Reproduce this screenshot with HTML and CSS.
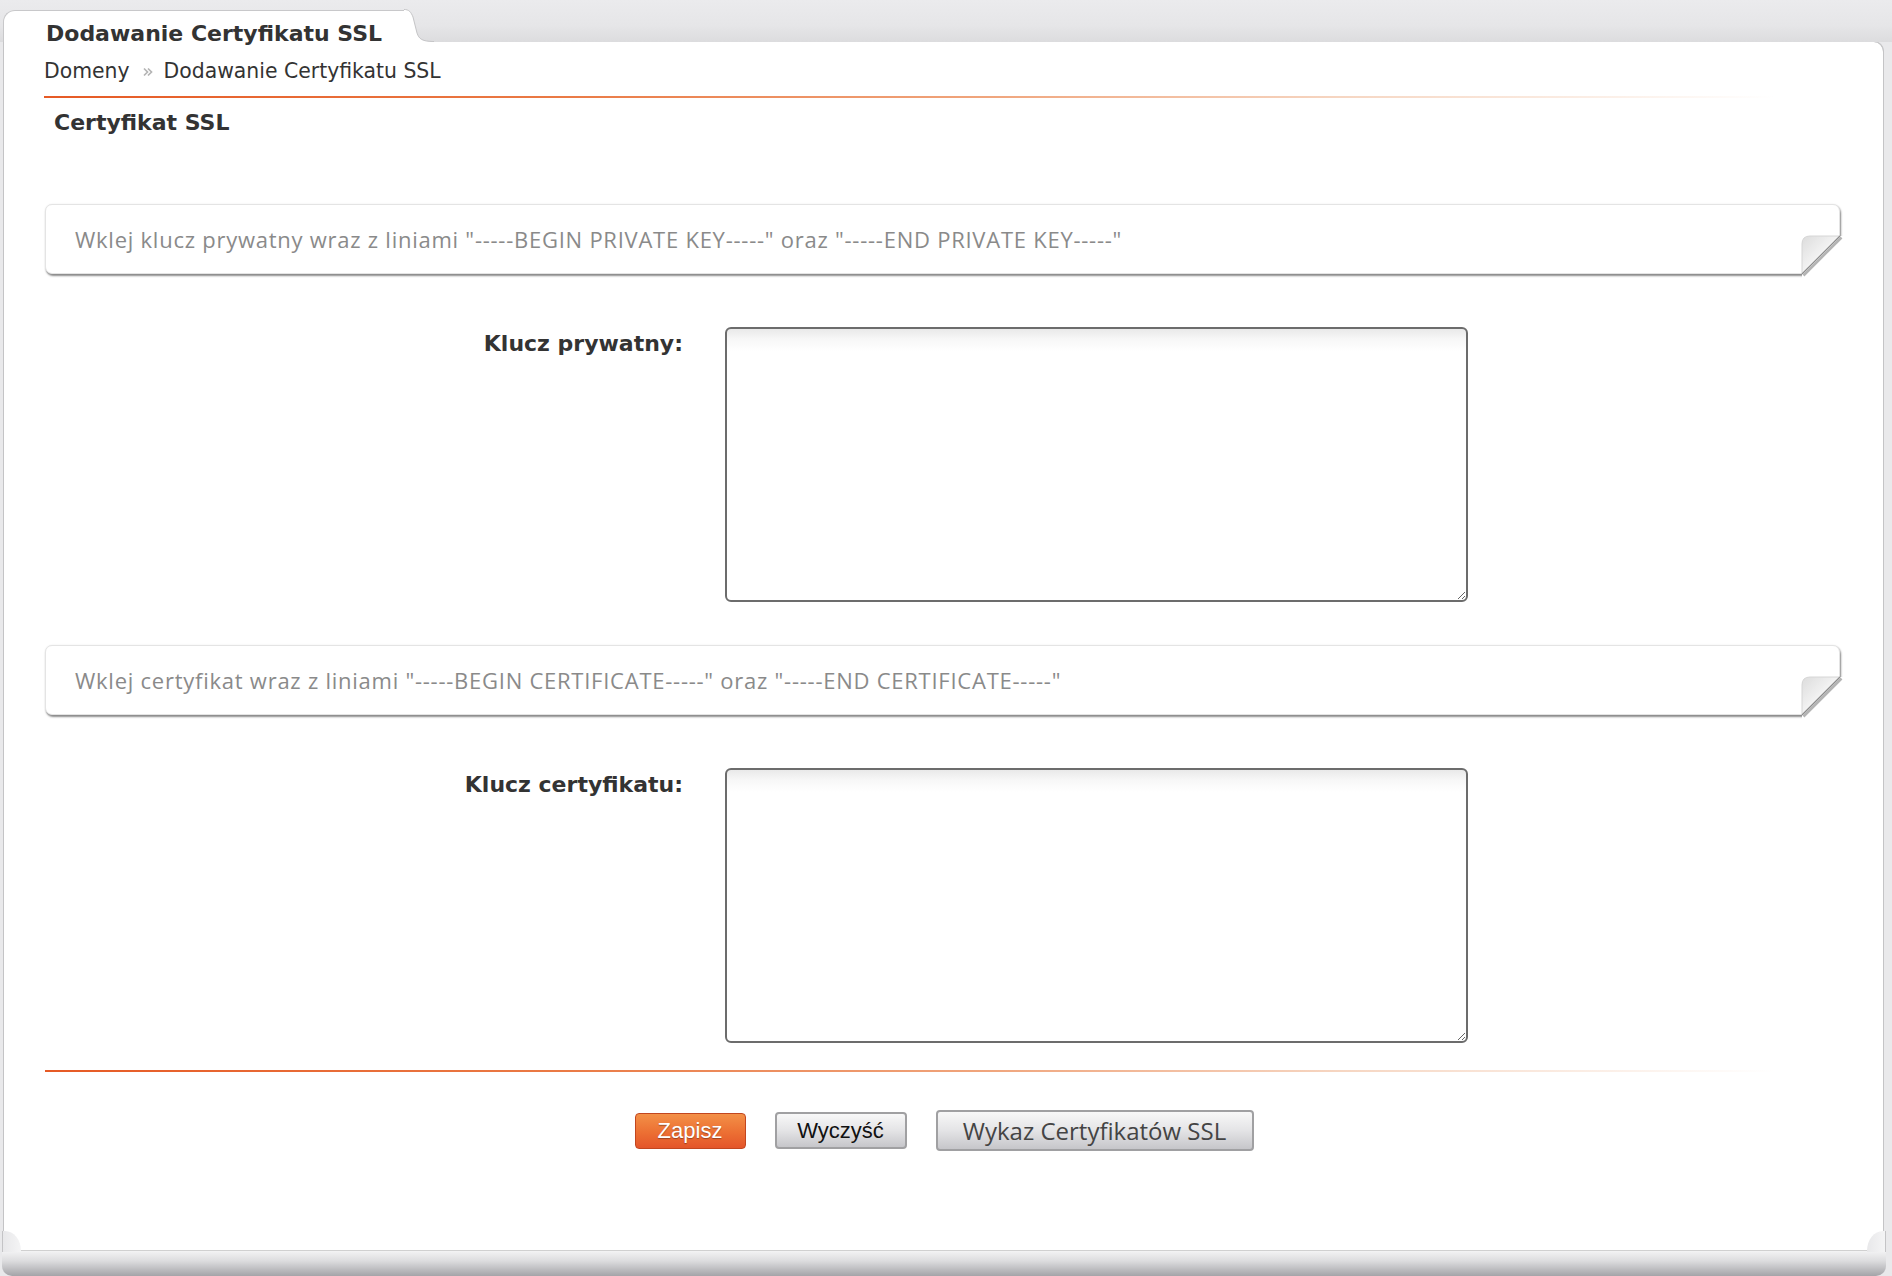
FILE: index.html
```html
<!DOCTYPE html>
<html lang="pl">
<head>
<meta charset="utf-8">
<title>Dodawanie Certyfikatu SSL</title>
<link rel="stylesheet" href="styles.css">
</head>
<body>
<div class="header">
  <div class="tab"><span class="tab-title">Dodawanie Certyfikatu SSL</span></div>
  <svg class="tab-slope" width="30" height="33" viewBox="0 0 30 33">
    <path d="M0 0.5 C5 0.5 7 3 9 8 L13 24 C15 30 18 32.5 30 32.5 L30 33 L0 33 Z" fill="#ffffff"/>
    <path d="M0 0.5 C5 0.5 7 3 9 8 L13 24 C15 30 18 32.5 30 32.5" fill="none" stroke="#c4c4c6" stroke-width="1"/>
  </svg>
</div>
<div class="panel">
  <div class="breadcrumb">
    <span>Domeny</span>
    <svg class="crumb-sep" width="10" height="10" viewBox="0 0 10 10"><path d="M1 1.5 L4.5 5 L1 8.5 M5 1.5 L8.5 5 L5 8.5" fill="none" stroke="#b4b4b4" stroke-width="1.7"/></svg>
    <span>Dodawanie Certyfikatu SSL</span>
  </div>
  <div class="orange-line"></div>
  <h2 class="section-title">Certyfikat SSL</h2>

  <div class="info-box">
    <span class="info-text">Wklej klucz prywatny wraz z liniami "-----BEGIN PRIVATE KEY-----" oraz "-----END PRIVATE KEY-----"</span>
    <svg class="fold" width="48" height="48" viewBox="0 0 48 48">
      <defs>
        <linearGradient id="fg1" x1="0" y1="0" x2="1" y2="1">
          <stop offset="0" stop-color="#dcdcdc"/>
          <stop offset="0.55" stop-color="#f6f6f6"/>
          <stop offset="1" stop-color="#ffffff"/>
        </linearGradient>
      </defs>
      <polygon points="42,4 48,4 48,48 4,48 4,42" fill="#ffffff"/>
      <path d="M43.5 5.5 L5.5 43.5" stroke="#b4b4b4" stroke-width="2.5"/>
      <path d="M4 42 L4 12 Q4 4 12 4 L42 4 Z" fill="url(#fg1)" stroke="#d6d6d6" stroke-width="1"/>
      <path d="M42 4 L4 42" stroke="#8c8c8c" stroke-width="1.2"/>
    </svg>
  </div>

  <div class="form-row first">
    <label class="form-label" for="key">Klucz prywatny:</label>
    <textarea id="key" class="form-area"></textarea>
  </div>

  <div class="info-box second">
    <span class="info-text">Wklej certyfikat wraz z liniami "-----BEGIN CERTIFICATE-----" oraz "-----END CERTIFICATE-----"</span>
    <svg class="fold" width="48" height="48" viewBox="0 0 48 48">
      <defs>
        <linearGradient id="fg2" x1="0" y1="0" x2="1" y2="1">
          <stop offset="0" stop-color="#dcdcdc"/>
          <stop offset="0.55" stop-color="#f6f6f6"/>
          <stop offset="1" stop-color="#ffffff"/>
        </linearGradient>
      </defs>
      <polygon points="42,4 48,4 48,48 4,48 4,42" fill="#ffffff"/>
      <path d="M43.5 5.5 L5.5 43.5" stroke="#b4b4b4" stroke-width="2.5"/>
      <path d="M4 42 L4 12 Q4 4 12 4 L42 4 Z" fill="url(#fg2)" stroke="#d6d6d6" stroke-width="1"/>
      <path d="M42 4 L4 42" stroke="#8c8c8c" stroke-width="1.2"/>
    </svg>
  </div>

  <div class="form-row second">
    <label class="form-label" for="cert">Klucz certyfikatu:</label>
    <textarea id="cert" class="form-area"></textarea>
  </div>

  <div class="orange-line bottom"></div>

  <div class="buttons">
    <button class="btn btn-save" type="button">Zapisz</button>
    <button class="btn btn-clear" type="button">Wyczyść</button>
    <button class="btn btn-list" type="button">Wykaz Certyfikatów SSL</button>
  </div>
</div>
<div class="footer">
  <div class="bump bump-left"></div>
  <div class="bump bump-right"></div>
</div>
</body>
</html>
```

FILE: styles.css
```css
html, body {
  margin: 0;
  padding: 0;
}
body {
  height: 1276px;
  display: flex;
  flex-direction: column;
  background: #e9e9eb;
  font-family: "DejaVu Sans", Verdana, sans-serif;
  color: #333;
  overflow: hidden;
}

/* header with tab */
.header {
  height: 42px;
  flex: 0 0 42px;
  display: flex;
  align-items: flex-end;
  padding-left: 3px;
  background: linear-gradient(#ebebed 0%, #e6e6e8 60%, #dcdcde 100%);
  position: relative;
  z-index: 2;
}
.tab {
  width: 401px;
  height: 32px;
  background: #fff;
  border-top: 1px solid #c8c8ca;
  border-left: 1px solid #c8c8ca;
  border-top-left-radius: 12px;
  padding-left: 42px;
  box-sizing: border-box;
  position: relative;
}
.tab-title {
  display: block;
  padding-top: 10px;
  font-size: 22px;
  line-height: 26px;
  font-weight: bold;
  color: #333;
  white-space: nowrap;
}
.tab-slope {
  display: block;
  flex: 0 0 30px;
}

/* main panel */
.panel {
  flex: 1 1 auto;
  margin: 0 8px 0 3px;
  background: #fff;
  border: 1px solid #c4c4c6;
  border-top: none;
  border-bottom: 1px solid #d0d0d0;
  border-top-right-radius: 10px;
  padding: 17px 43px 0 40px;
  display: flex;
  flex-direction: column;
  position: relative;
}
.panel::before {
  content: "";
  position: absolute;
  top: -1px;
  left: 430px;
  right: -1px;
  height: 10px;
  border-top: 1px solid #c4c4c6;
  border-right: 1px solid #c4c4c6;
  border-top-right-radius: 10px;
}

.breadcrumb {
  display: flex;
  align-items: center;
  font-size: 20.4px;
  line-height: 24px;
  color: #333;
}
.crumb-sep {
  margin: 1px 11px 0 13px;
}

.orange-line {
  height: 2px;
  margin-top: 13px;
  width: 1730px;
  background: linear-gradient(90deg, #e65a25 0%, #ea7a45 30%, #f0a67e 55%, #f6d6c2 75%, rgba(255,255,255,0) 100%);
}
.orange-line.bottom {
  margin-top: 27px;
  margin-left: 1px;
  width: 1729px;
}

.section-title {
  margin: 12px 0 0 0;
  padding-left: 10px;
  font-size: 22px;
  line-height: 26px;
  font-weight: bold;
  color: #333;
}

/* info boxes */
.info-box {
  position: relative;
  margin-top: 68px;
  margin-left: 1px;
  height: 70px;
  box-sizing: border-box;
  background: #fff;
  border: 1px solid #e4e4e4;
  border-radius: 7px;
  box-shadow: 1px 2px 2px rgba(0, 0, 0, 0.45), 0 0 2px rgba(0, 0, 0, 0.08);
  display: flex;
  align-items: center;
  padding-left: 29px;
}
.info-box.second {
  margin-top: 43px;
}
.info-text {
  font-family: "Open Sans", sans-serif;
  font-size: 22px;
  letter-spacing: 0.75px;
  color: #8a8a8a;
  white-space: nowrap;
}
.fold {
  position: absolute;
  right: -7px;
  bottom: -7px;
}

/* form rows */
.form-row {
  display: grid;
  grid-template-columns: 639px 743px;
  column-gap: 42px;
  margin-top: 53px;
}
.form-label {
  text-align: right;
  font-size: 22px;
  line-height: 26px;
  font-weight: bold;
  color: #333;
  padding-top: 4px;
}
.form-area {
  display: block;
  width: 743px;
  height: 275px;
  box-sizing: border-box;
  margin: 0;
  border: 2px solid #6c6c6c;
  border-radius: 6px;
  background: linear-gradient(#e9e9e9 0px, #f7f7f7 10px, #ffffff 22px);
  font-family: "DejaVu Sans Mono", monospace;
  font-size: 14px;
  padding: 6px;
}

/* buttons */
.buttons {
  margin-top: 38px;
  display: flex;
  justify-content: center;
  align-items: center;
  gap: 29px;
  padding-left: 4px;
}
.btn {
  box-sizing: border-box;
  border-radius: 4px;
  padding: 0;
  cursor: pointer;
}
.btn-save {
  width: 111px;
  height: 36px;
  border: 1px solid #c2461f;
  background: linear-gradient(#f39047 0%, #ec6f33 55%, #e4552a 100%);
  color: #fff;
  font-family: "Liberation Sans", Arial, sans-serif;
  font-size: 22px;
  text-shadow: 0 1px 1px rgba(0, 0, 0, 0.35);
}
.btn-clear {
  width: 132px;
  height: 37px;
  border: 2px solid #a0a0a2;
  background: linear-gradient(#f8f8f8 0%, #e4e4e6 50%, #c6c6ca 100%);
  color: #111;
  font-family: "Liberation Sans", Arial, sans-serif;
  font-size: 22px;
}
.btn-list {
  width: 318px;
  height: 41px;
  border: 2px solid #a0a0a2;
  background: linear-gradient(#f8f8f8 0%, #e4e4e6 50%, #c6c6ca 100%);
  color: #444;
  font-family: "Open Sans", sans-serif;
  font-size: 24px;
}

/* footer bar */
.footer {
  flex: 0 0 25px;
  height: 25px;
  margin: 0 6px 0 2px;
  background: linear-gradient(#f3f3f4 0%, #dcdcde 40%, #a4a4a8 100%);
  border-bottom-left-radius: 10px;
  border-bottom-right-radius: 10px;
  position: relative;
}
.bump {
  position: absolute;
  top: -20px;
  width: 18px;
  height: 21px;
  background: linear-gradient(90deg, #e8e8ea, #f4f4f5);
}
.bump-left {
  left: 0;
  border-top-right-radius: 16px 20px;
  border-left: 1px solid #c4c4c6;
}
.bump-right {
  right: 0;
  border-top-left-radius: 16px 20px;
  border-right: 1px solid #c4c4c6;
}
```
